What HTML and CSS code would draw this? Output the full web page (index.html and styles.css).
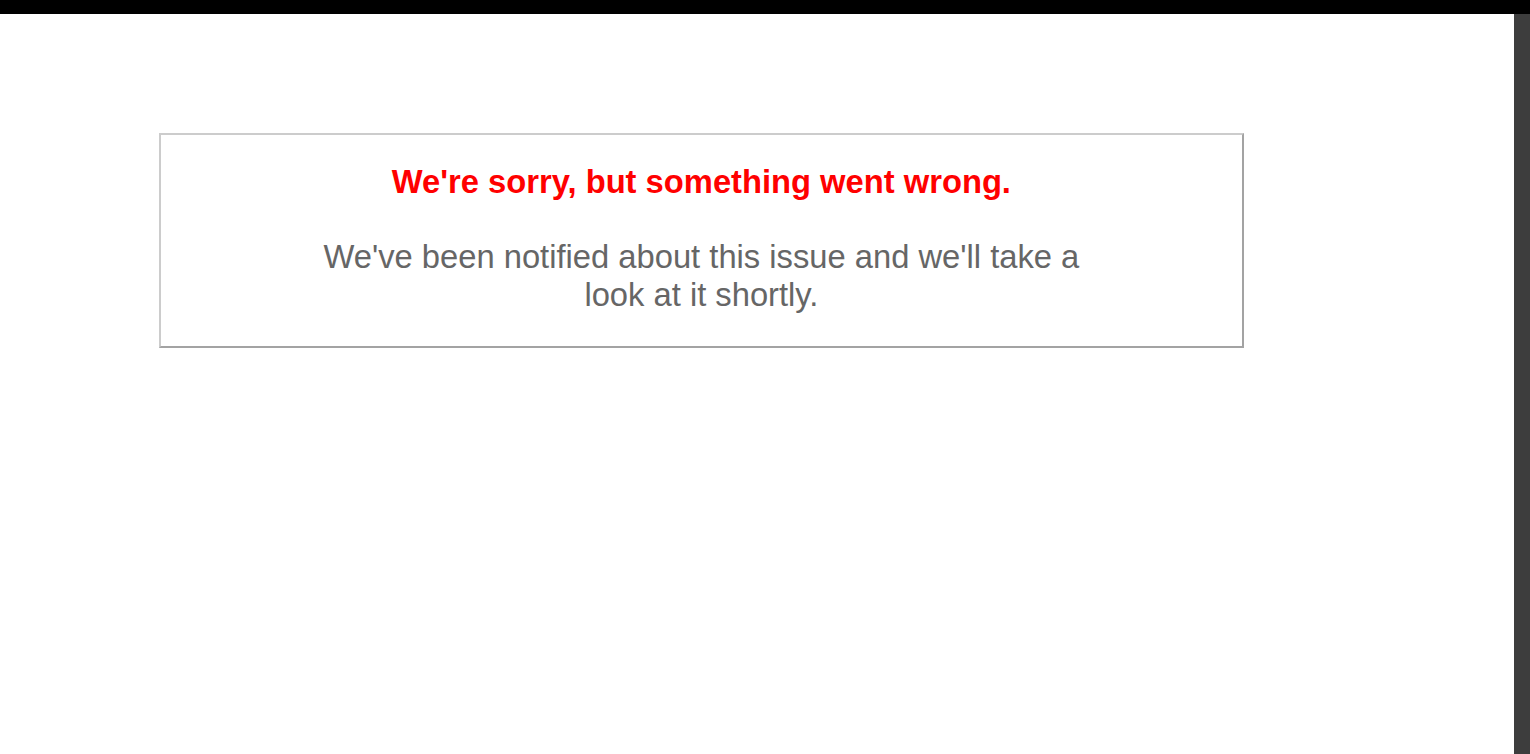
FILE: index.html
```html
<!DOCTYPE html>
<html lang="en">
<head>
  <meta charset="UTF-8">
  <meta name="viewport" content="width=device-width, initial-scale=1.0">
  <title>We're sorry, but something went wrong (500)</title>
  <link rel="stylesheet" href="styles.css">
</head>
<body>
  <div class="topbar"></div>
  <div class="window">
    <div class="page">
      <div class="dialog">
        <h1>We're sorry, but something went wrong.</h1>
        <p>We've been notified about this issue and we'll take a look at it shortly.</p>
      </div>
    </div>
    <div class="scrollbar"></div>
  </div>
</body>
</html>
```

FILE: styles.css
```css
html, body {
  height: 100%;
}

body {
  margin: 0;
  display: flex;
  flex-direction: column;
  background-color: #fff;
  color: #666;
  font-family: 'Liberation Sans', Arial, sans-serif;
  font-size: 32.72px;
  text-align: center;
  overflow: hidden;
}

.topbar {
  height: 14px;
  background: #000;
  flex-shrink: 0;
}

.window {
  flex: 1;
  display: flex;
  min-height: 0;
}

.page {
  flex: 1;
  background: #fff;
  padding: 119px 0 0 159px;
}

.scrollbar {
  width: 16px;
  background: #3d3d3d;
}

.dialog {
  width: calc(25em + 1px);
  padding: 0 4em;
  border: 2px solid #ccc;
  border-right-color: #a3a3a3;
  border-bottom-color: #a3a3a3;
}

.dialog h1 {
  font-size: 100%;
  color: #f00;
  line-height: 1.5em;
  margin: 0.67em 0;
}

.dialog p {
  margin: 0.97em 0 1em;
}
```
